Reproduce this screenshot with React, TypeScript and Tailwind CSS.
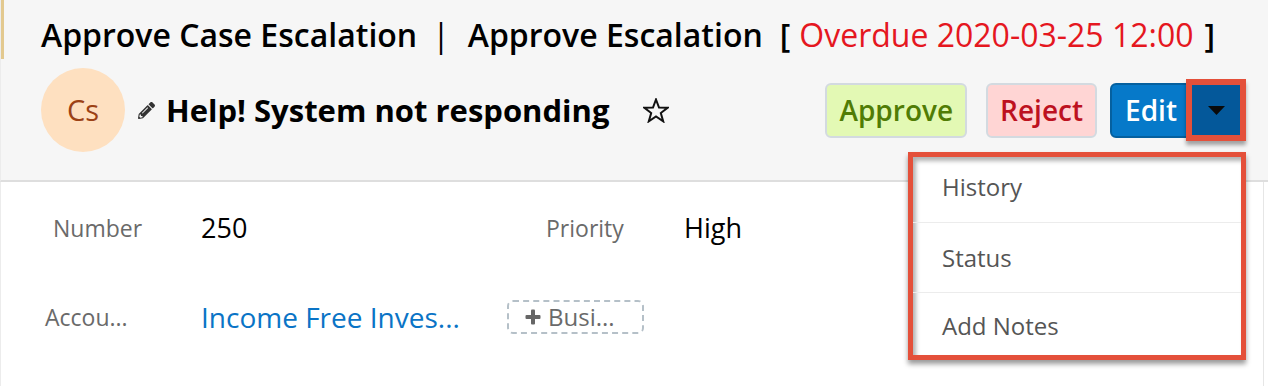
import React from "react";
import { FaPencilAlt } from "react-icons/fa";

function Star() {
  return (
    <svg width="26" height="25" viewBox="0 0 26 25" fill="none">
      <polygon
        points="13,1.5 16,9.5 24.5,9.8 17.8,15 20.2,23.3 13,18.4 5.8,23.3 8.2,15 1.5,9.8 10,9.5"
        stroke="#111"
        strokeWidth="2"
        strokeLinejoin="miter"
      />
    </svg>
  );
}

function Plus() {
  return (
    <svg width="16" height="16" viewBox="0 0 16 16" className="mr-[7px] shrink-0">
      <rect x="6" y="0.5" width="4" height="15" rx="1" fill="#666" />
      <rect x="0.5" y="6" width="15" height="4" rx="1" fill="#666" />
    </svg>
  );
}

export default function App() {
  return (
    <div className="relative w-[1268px] h-[386px] overflow-hidden bg-white font-['Open_Sans',sans-serif] text-black">
      {/* header */}
      <div className="relative h-[182px] bg-[#f6f6f6] border-b-2 border-[#dedede] border-l border-l-[#ececec]">
        <div className="absolute left-0 top-0 w-[3px] h-[59px] bg-[#e3c98f]" />
        <div className="pl-[40px] pt-[13px] h-[57px] flex items-center text-[32px] font-semibold leading-[44px] whitespace-nowrap">
          <span>Approve Case Escalation</span>
          <span className="ml-[15px] mr-[18px] font-normal">|</span>
          <span>Approve Escalation</span>
          <span className="ml-[17px]">[</span>
          <span className="ml-[9px] text-[#e5171f] font-normal">Overdue 2020-03-25 12:00</span>
          <span className="ml-[11px]">]</span>
        </div>
        <div className="mt-[11px] pl-[40px] pr-[22px] flex items-center h-[84px]">
          <div className="w-[84px] h-[84px] rounded-full bg-[#fee0c0] flex items-center justify-center text-[#9c4215] text-[29px]">
            Cs
          </div>
          <FaPencilAlt className="ml-[13px] text-[#333] w-[17px] h-[17px]" />
          <span className="ml-[11px] text-[31px] font-bold leading-[40px]">Help! System not responding</span>
          <span className="ml-[34px] flex items-center">
            <Star />
          </span>
          <div className="ml-auto flex items-center">
            <button className="h-[55px] px-[12px] rounded-[6px] border-2 border-[#d3dae0] bg-[#e3f9b4] text-[#507c05] text-[28px] font-semibold leading-none">
              Approve
            </button>
            <button className="ml-[19px] h-[55px] px-[12px] rounded-[6px] border-2 border-[#d3dae0] bg-[#ffd5d4] text-[#bd1120] text-[28px] font-semibold leading-none">
              Reject
            </button>
            <div className="ml-[13px] flex items-center">
              <button className="h-[55px] w-[82px] rounded-l-[6px] border-2 border-[#05609f] bg-[#0679c9] text-white text-[28px] font-semibold leading-none">
                Edit
              </button>
              <div className="-ml-[6px] w-[60px] h-[62px] border-[6px] border-[#e4503a] bg-[#04589a] flex items-center justify-center shadow-[0_4px_4px_rgba(0,0,0,0.35)]">
                <svg width="17" height="9" viewBox="0 0 17 9">
                  <polygon points="0,0 17,0 8.5,9" fill="#0a0a0a" />
                </svg>
              </div>
            </div>
          </div>
        </div>
      </div>

      {/* body */}
      <div className="w-[1264px] h-[204px] border-r border-[#e6e6e6] border-l border-l-[#ececec] pt-[16px] flex flex-col gap-[29px]">
        <div className="h-[60px] flex items-center">
          <span className="w-[200px] pl-[52px] text-[23px] text-[#6a6a6a]">Number</span>
          <span className="w-[345px] text-[27px]">250</span>
          <span className="w-[138px] text-[23px] text-[#6a6a6a]">Priority</span>
          <span className="text-[27px]">High</span>
        </div>
        <div className="h-[60px] flex items-center">
          <span className="w-[200px] pl-[44px] text-[23px] text-[#6a6a6a]">Accou...</span>
          <span className="w-[306px] text-[28px] text-[#0a74c6]">Income Free Inves...</span>
          <span className="w-[137px] h-[34px] rounded-[6px] border-2 border-dashed border-[#b5c0c8] flex items-center pl-[16px] text-[24px] text-[#6a6a6a]">
            <Plus />
            Busi...
          </span>
        </div>
      </div>

      {/* dropdown menu */}
      <div className="absolute left-[908px] top-[152px] w-[338px] h-[208px] border-[5px] border-[#e4503a] bg-white shadow-[0_4px_5px_rgba(0,0,0,0.4)]">
        <div className="h-full flex flex-col shadow-[inset_3px_4px_4px_rgba(0,0,0,0.3)] text-[24px] text-[#555]">
          <div className="h-[65px] pb-[5px] flex items-center pl-[29px]">History</div>
          <div className="h-[70px] border-t border-[#ececec] flex items-center pl-[29px]">Status</div>
          <div className="flex-1 border-t border-[#ececec] pt-[17px] pl-[29px] leading-[32px]">Add Notes</div>
        </div>
      </div>
    </div>
  );
}
